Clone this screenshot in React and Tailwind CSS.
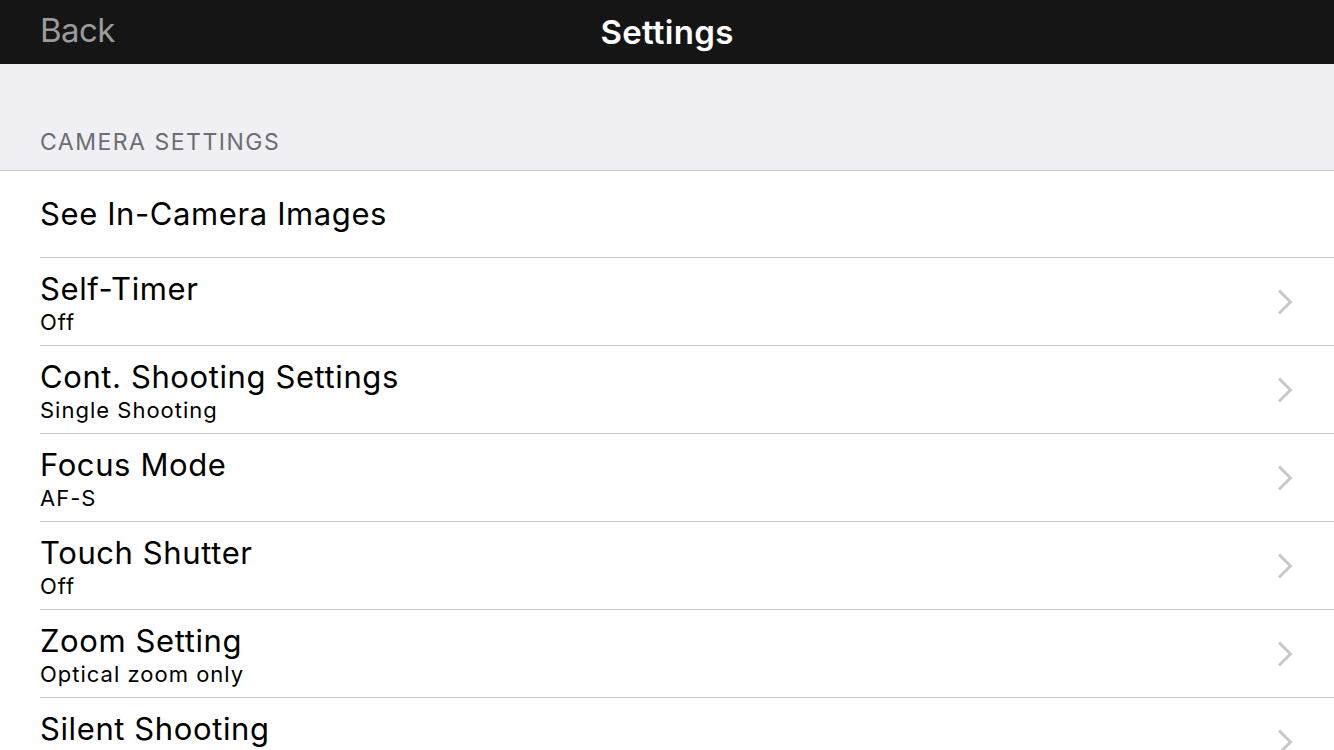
import React from "react";

const rows = [
  { title: "Self-Timer", sub: "Off" },
  { title: "Cont. Shooting Settings", sub: "Single Shooting" },
  { title: "Focus Mode", sub: "AF-S" },
  { title: "Touch Shutter", sub: "Off" },
  { title: "Zoom Setting", sub: "Optical zoom only" },
  { title: "Silent Shooting", sub: "Off" },
];

function Chevron() {
  return (
    <svg width="18" height="28" viewBox="0 0 18 28" className="shrink-0">
      <polyline points="3,2.5 14.5,14 3,25.5" fill="none" stroke="#c7c7cc" strokeWidth="3" />
    </svg>
  );
}

export default function App() {
  return (
    <div
      className="w-[1334px] h-[750px] overflow-hidden bg-white"
      style={{ fontFamily: "Inter, 'Noto Sans', sans-serif" }}
    >
      <div className="relative h-[64px] bg-[#151515] flex items-center justify-center">
        <span className="absolute left-[40px] top-[8px] text-[33px] leading-[44px] text-[#9b9b9b] tracking-[-0.6px]">Back</span>
        <span className="text-[33px] font-semibold text-white tracking-[0.3px] leading-none">Settings</span>
      </div>
      <div className="h-[107px] bg-[#efeff4] border-b border-[#c8c7cc] flex items-end pl-[40px] pb-[13px]">
        <span className="text-[23px] leading-[30px] text-[#6d6d72] tracking-[1.5px]">CAMERA SETTINGS</span>
      </div>
      <div className="pl-[40px]">
        <div className="h-[87px] border-b border-[#c8c7cc] flex items-center">
          <span className="text-[31px] text-black tracking-[0.6px]">See In-Camera Images</span>
        </div>
        {rows.map((r) => (
          <div key={r.title} className="h-[88px] border-b border-[#c8c7cc] flex items-center pr-[40px]">
            <div className="flex-1 flex flex-col pt-[4px]">
              <span className="text-[31px] leading-[37px] text-black tracking-[0.6px]">{r.title}</span>
              <span className="text-[22px] leading-[31px] text-black tracking-[1px]">{r.sub}</span>
            </div>
            <Chevron />
          </div>
        ))}
      </div>
    </div>
  );
}
